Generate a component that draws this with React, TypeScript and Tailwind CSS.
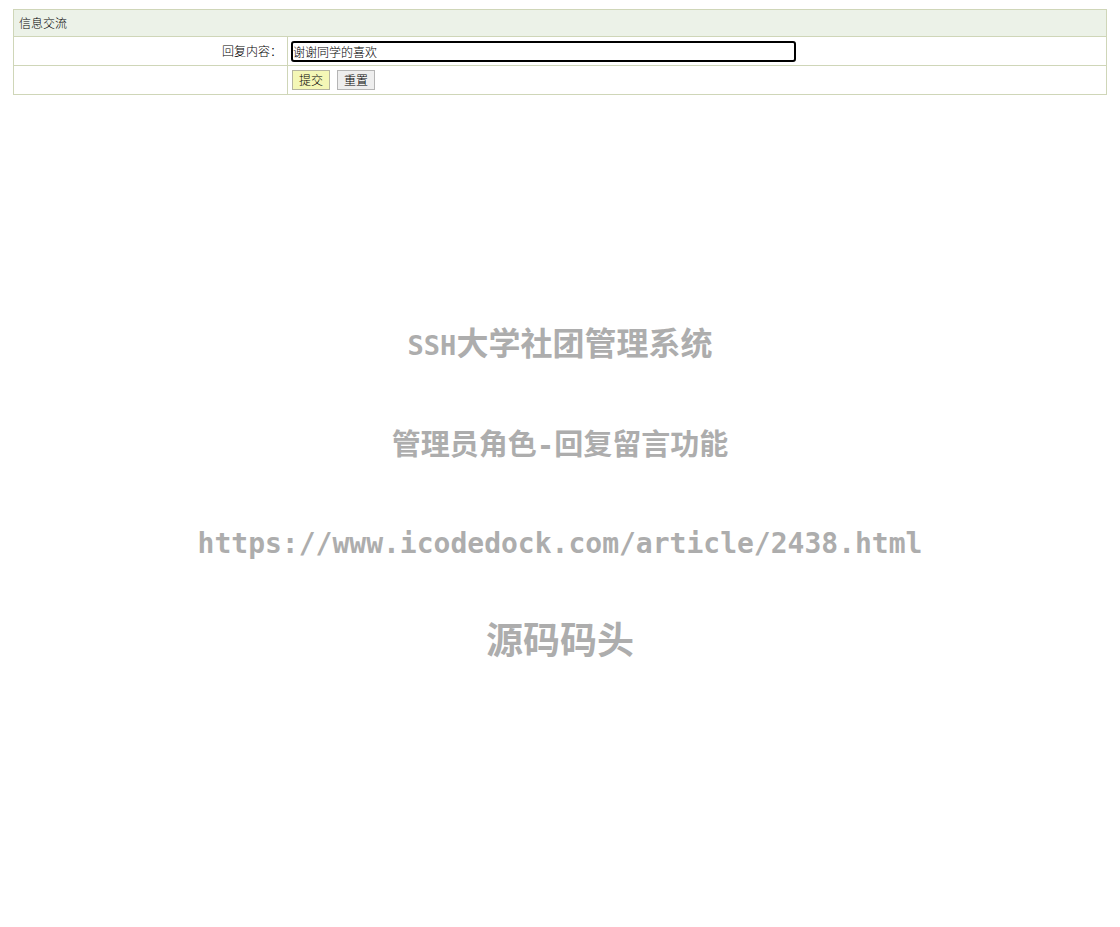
export default function App() {
  return (
    <div className="min-h-screen bg-white pt-[9px] px-[13px] text-[12px] font-light text-black" style={{ fontFamily: '"Noto Sans CJK SC", "Liberation Sans", sans-serif' }}>
      {/* 回复表单 */}
      <table className="w-full border-collapse border border-[#cfd6b8]">
        <tbody>
          <tr className="h-[27px] bg-[#ecf2e8]">
            <td colSpan={2} className="border border-[#cfd6b8] px-[5px] leading-none">信息交流</td>
          </tr>
          <tr className="h-[29px]">
            <td className="w-[274px] border border-[#cfd6b8] pr-[5px] text-right leading-none">回复内容：</td>
            <td className="border border-[#cfd6b8] px-[3px]">
              <input
                defaultValue="谢谢同学的喜欢"
                className="block w-[505px] h-[21px] rounded-[3px] border-2 border-black px-0 text-[12px] font-light leading-none outline-none"
              />
            </td>
          </tr>
          <tr className="h-[29px]">
            <td className="border border-[#cfd6b8]"></td>
            <td className="border border-[#cfd6b8] px-[4px]">
              <div className="flex items-center gap-[7px]">
                <button className="w-[38px] h-[20px] border border-[#b5b5a0] bg-[#f4f7b6] text-[12px] font-light leading-none">提交</button>
                <button className="w-[38px] h-[20px] border border-[#b5b5b5] bg-[#eeeeee] text-[12px] font-light leading-none">重置</button>
              </div>
            </td>
          </tr>
        </tbody>
      </table>

      {/* 水印 */}
      <div className="flex flex-col items-center font-bold text-[#adadad] leading-none" style={{ fontFamily: '"DejaVu Sans Mono", "Noto Sans CJK SC", monospace' }}>
        <div className="mt-[233px] text-[32px]">
          <span className="text-[27px]">SSH</span>大学社团管理系统
        </div>
        <div className="mt-[71px] text-[29px]">管理员角色-回复留言功能</div>
        <div className="mt-[70px] text-[28px]">https://www.icodedock.com/article/2438.html</div>
        <div className="mt-[65px] text-[37px]">源码码头</div>
      </div>
    </div>
  )
}
